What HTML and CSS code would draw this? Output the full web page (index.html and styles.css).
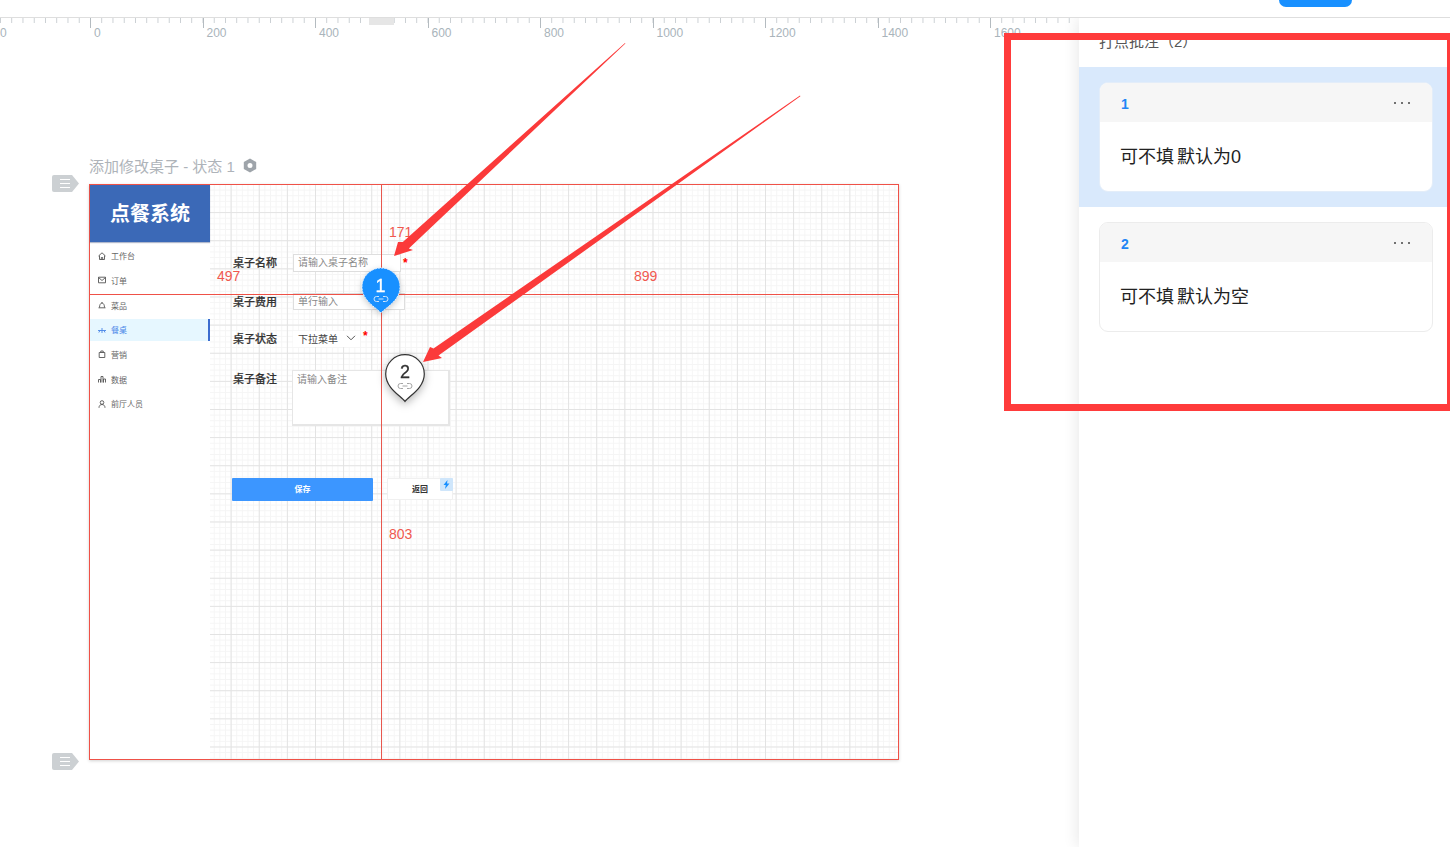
FILE: index.html
```html
<!DOCTYPE html>
<html lang="zh">
<head>
<meta charset="utf-8">
<title>打点批注</title>
<link rel="stylesheet" href="styles.css">
</head>
<body>
<header class="topbar"><div class="top-spacer"></div><div class="top-btn"></div><div class="top-end"></div></header>
<div class="workspace">
  <main class="canvas">
    <div class="ruler">
      <div class="ruler-first">0</div>
      <div class="ruler-cell">0</div><div class="ruler-cell">200</div><div class="ruler-cell">400</div><div class="ruler-cell">600</div>
      <div class="ruler-cell">800</div><div class="ruler-cell">1000</div><div class="ruler-cell">1200</div><div class="ruler-cell">1400</div><div class="ruler-cell">1600</div>
      <div class="ruler-mark"></div>
    </div>

    <div class="frame-title">添加修改桌子 - 状态 1
      <svg class="hex" width="14" height="15" viewBox="0 0 14 15"><path fill-rule="evenodd" d="M7 .5l6.2 3.5v7L7 14.500.8 11V4zM7 5a2.500 2.500 0 1 0 0 5 2.500 2.500 0 0 0 0-5z"/></svg>
    </div>
    <div class="tag tag-top"><svg width="27" height="17" viewBox="0 0 27 17"><path class="tag-body" d="M2 0h18l7 8.500-7 8.500H2a2 2 0 0 1-2-2V2a2 2 0 0 1 2-2z"/><path class="tag-lines" d="M8 4.500h10M8 8.500h10M8 12.500h10"/></svg></div>
    <div class="tag tag-bottom"><svg width="27" height="17" viewBox="0 0 27 17"><path class="tag-body" d="M2 0h18l7 8.500-7 8.500H2a2 2 0 0 1-2-2V2a2 2 0 0 1 2-2z"/><path class="tag-lines" d="M8 4.500h10M8 8.500h10M8 12.500h10"/></svg></div>

    <section class="frame">
      <aside class="sidebar">
        <div class="logo">点餐系统</div>
        <nav class="menu">
          <div class="menu-item"><svg viewBox="0 0 8 8"><path d="M.5 4L4 .8 7.500 4M1.500 3.500v4h5v-4M3.300 7.500V5.500h1.400v2"/></svg>工作台</div>
          <div class="menu-item"><svg viewBox="0 0 8 8"><path d="M.5 1.200h7v5.600h-7zM.5 1.500L4 4.500l3.500-3"/></svg>订单</div>
          <div class="menu-item"><svg viewBox="0 0 8 8"><path d="M.5 6.800h7M1.500 6.500C1.500 4 2.500 2 4 2s2.500 2 2.500 4.500M4 1v1"/></svg>菜品</div>
          <div class="menu-item is-active"><svg viewBox="0 0 8 8"><path d="M0 4.500h8M4 2v5M2 4.500L.8 6.500M6 4.500l1 2"/></svg>餐桌</div>
          <div class="menu-item"><svg viewBox="0 0 8 8"><path d="M1.200 2.500h5.600v5H1.200zM2.800 2.500V1h2.400v1.500"/></svg>营销</div>
          <div class="menu-item"><svg viewBox="0 0 8 8"><path d="M.5 7.500V4.500h2v3M3 7.500V1.500h2v6M5.500 7.500V4h2v3.500"/></svg>数据</div>
          <div class="menu-item"><svg viewBox="0 0 8 8"><circle cx="4" cy="2.500" r="1.800"/><path d="M1 7.800C1 5.800 2.200 4.500 4 4.500s3 1.300 3 3.300"/></svg>前厅人员</div>
        </nav>
      </aside>
      <div class="form">
        <div class="row row-name">
          <label class="label">桌子名称</label>
          <div class="input input-name">请输入桌子名称</div>
          <span class="star star-name">*</span>
        </div>
        <div class="row row-fee">
          <label class="label">桌子费用</label>
          <div class="input input-fee">单行输入</div>
        </div>
        <div class="row row-state">
          <label class="label">桌子状态</label>
          <div class="select">下拉菜单<svg width="10" height="6" viewBox="0 0 10 6"><path d="M1 .8l4 4 4-4"/></svg></div>
          <span class="star star-state">*</span>
        </div>
        <div class="row row-note">
          <label class="label">桌子备注</label>
          <div class="textarea">请输入备注</div>
        </div>
        <div class="actions">
          <div class="btn-save">保存</div>
          <div class="btn-back">返回
            <span class="bolt"><svg width="7" height="9" viewBox="0 0 7 9"><path d="M4.500 0L.5 5h2.300L2 9l4.500-5.500H4z"/></svg></span>
          </div>
        </div>
      </div>
    </section>

    <div class="line-h"></div>
    <div class="line-v"></div>
    <span class="measure m-top">171</span>
    <span class="measure m-left">497</span>
    <span class="measure m-right">899</span>
    <span class="measure m-bottom">803</span>

    <svg class="pin pin-one" width="40" height="48" viewBox="0 0 40 48">
      <path class="pin-shape" d="M20 46C16 41 1 34 1 20A19 19 0 1 1 39 20C39 34 24 41 20 46Z"/>
      <text x="19.500" y="24.500" text-anchor="middle" class="pin-num">1</text>
      <path class="pin-link" d="M18 29.500h-2.500a2.500 2.500 0 0 0 0 5H18M22 29.500h2.500a2.500 2.500 0 0 1 0 5H22M17.500 32h5"/>
    </svg>
    <svg class="pin pin-two" width="40" height="49" viewBox="0 0 40 49">
      <path class="pin-shape" d="M20 47.500C16 42 .7 34 .7 20A19.300 19.300 0 1 1 39.300 20C39.300 34 24 42 20 47.500Z"/>
      <text x="20" y="24" text-anchor="middle" class="pin-num">2</text>
      <path class="pin-link" d="M18 29.500h-2.500a2.500 2.500 0 0 0 0 5H18M22 29.500h2.500a2.500 2.500 0 0 1 0 5H22M17.500 32h5"/>
    </svg>
  </main>

  <aside class="panel">
    <h2 class="panel-title">打点批注（2）</h2>
    <div class="note-wrap is-current">
      <article class="note">
        <div class="note-head"><span class="note-num">1</span><svg width="16" height="2" viewBox="0 0 16 2"><circle cx="1" cy="1" r="1"/><circle cx="8" cy="1" r="1"/><circle cx="15" cy="1" r="1"/></svg></div>
        <div class="note-body">可不填 默认为0</div>
      </article>
    </div>
    <div class="note-wrap">
      <article class="note">
        <div class="note-head"><span class="note-num">2</span><svg width="16" height="2" viewBox="0 0 16 2"><circle cx="1" cy="1" r="1"/><circle cx="8" cy="1" r="1"/><circle cx="15" cy="1" r="1"/></svg></div>
        <div class="note-body">可不填 默认为空</div>
      </article>
    </div>
  </aside>
</div>

<svg class="arrows" width="1450" height="847" viewBox="0 0 1450 847">
  <polygon points="625,43 625.400,43.600 408.800,248.400 413,250 394,256 398,242 402.800,242"/>
  <polygon points="800,95.600 800.400,96.200 438.500,355.500 442,358 423,362 430,347 433.500,348.500"/>
</svg>
<div class="highlight-box"></div>
</body>
</html>
```
FILE: styles.css
```css
* { box-sizing: border-box; }
html, body { margin: 0; padding: 0; }
body {
  position: relative;
  width: 1450px;
  height: 847px;
  overflow: hidden;
  background: #fff;
  font-family: "Liberation Sans", "Noto Sans CJK SC", sans-serif;
  color: #333;
}

/* top strip */
.topbar {
  position: relative;
  z-index: 3;
  display: flex;
  height: 18px;
  background: #fff;
  border-bottom: 1px solid #dedede;
}
.top-spacer { width: 1279px; }
.top-btn {
  width: 73px;
  height: 7px;
  background: #1890ff;
  border-radius: 0 0 7px 7px;
}
.top-end { flex: 1; }

.workspace { display: flex; height: 829px; }

/* canvas: items are placed on a free artboard, coordinates relative to it */
.canvas {
  position: relative;
  width: 1079px;
  flex: none;
  overflow: hidden;
}

/* ruler */
.ruler {
  position: relative;
  display: flex;
  height: 24px;
  font-size: 12px;
  line-height: 14px;
  color: #a9b4bb;
  background-image: linear-gradient(to right, #c9ced2 1px, transparent 1px);
  background-size: 11.25px 5px;
  background-repeat: repeat-x;
}
.ruler-first { width: 90px; flex: none; padding-top: 8px; }
.ruler-cell {
  width: 112.5px;
  flex: none;
  padding: 8px 0 0 4px;
  background: linear-gradient(#b4bbc0, #b4bbc0) left top / 1px 10px no-repeat;
}
.ruler-mark {
  position: absolute;
  left: 369px;
  top: 0;
  width: 25px;
  height: 7px;
  background: #e6e6e6;
}

/* artboard title and tags */
.frame-title {
  position: absolute;
  left: 89px;
  top: 137px;
  display: flex;
  align-items: center;
  gap: 8px;
  height: 20px;
  font-size: 15px;
  color: #aeb3b9;
  white-space: nowrap;
}
.hex { fill: #9ea4aa; }
.tag { position: absolute; left: 52px; width: 27px; height: 17px; }
.tag svg { display: block; }
.tag-top { top: 157px; }
.tag-bottom { top: 735px; }
.tag-body { fill: #ccd0d3; }
.tag-lines { stroke: #fff; stroke-width: 1.2; fill: none; }

/* artboard */
.frame {
  position: absolute;
  left: 89px;
  top: 166px;
  width: 810px;
  height: 576px;
  display: flex;
  border: 1px solid #ef5147;
  box-shadow: 0 1px 3px rgba(0, 0, 0, .18);
  background-color: #fff;
  background-image:
    linear-gradient(to right, #e3e3e3 1.2px, transparent 1.2px),
    linear-gradient(to bottom, #e3e3e3 1.2px, transparent 1.2px),
    linear-gradient(to right, #f5f5f5 1px, transparent 1px),
    linear-gradient(to bottom, #f5f5f5 1px, transparent 1px);
  background-size: 28.125px 28.125px, 28.125px 28.125px, 5.625px 5.625px, 5.625px 5.625px;
  background-position: 0 -1px;
}

/* sidebar */
.sidebar { width: 120px; flex: none; background: #fff; }
.logo {
  height: 57px;
  background: #3b69b7;
  color: #fff;
  font-size: 20px;
  font-weight: 700;
  line-height: 59px;
  text-align: center;
  box-shadow: 0 1px 1px rgba(60, 80, 130, .4);
}
.menu { padding-top: 1.300px; }
.menu-item {
  display: flex;
  align-items: center;
  gap: 5px;
  height: 24.700px;
  padding-left: 8px;
  font-size: 8px;
  color: #666;
}
.menu-item svg {
  width: 8px;
  height: 8px;
  fill: none;
  stroke: #555;
  stroke-width: .9;
}
.menu-item.is-active {
  height: 22px;
  margin: 1.300px 0 1.400px;
  background: #e6f7ff;
  color: #4a86e8;
  border-right: 2px solid #3b6ccf;
}
.menu-item.is-active svg { stroke: #4a86e8; }

/* form */
.form { flex: 1; padding: 69px 0 0 23px; }
.row { display: flex; align-items: center; }
.row-name { height: 18px; }
.row-fee { height: 17px; margin-top: 21px; }
.row-state { height: 16px; margin-top: 21px; }
.row-note { height: 56px; margin-top: 23px; align-items: flex-start; }
.row-note .label { margin-top: 1px; }
.label {
  width: 60px;
  flex: none;
  font-size: 11px;
  line-height: 16px;
  font-weight: 500;
  color: #333;
  -webkit-text-stroke: .2px #333;
}
.input {
  height: 100%;
  padding-left: 4px;
  font-size: 10px;
  line-height: 16px;
  color: #888;
  background: #fff;
  border: 1px solid #dedede;
}
.input-name { width: 108px; }
.input-fee { width: 112px; }
.star { color: #f00; font-size: 12px; line-height: 12px; font-weight: 700; }
.star-name { margin: 0 0 0 2px; }
.star-state { margin: -6px 0 0 3px; }
.select {
  display: flex;
  align-items: center;
  width: 67px;
  height: 100%;
  padding: 0 4px 2px 5px;
  font-size: 10px;
  color: #444;
  background: #fff;
}
.select svg {
  margin-left: 8px;
  fill: none;
  stroke: #555;
  stroke-width: 1;
}
.textarea {
  width: 158px;
  height: 100%;
  margin-left: -1px;
  padding: 1px 4px;
  font-size: 10px;
  line-height: 15px;
  color: #888;
  background: #fff;
  border: 2px solid #e6e6e6;
  border-width: 1px 2px 2px 1px;
}
.actions { display: flex; gap: 14px; margin: 52px 0 0 -1px; }
.btn-save {
  width: 141px;
  height: 23px;
  background: #3c96ff;
  color: #fff;
  font-size: 8px;
  font-weight: 700;
  line-height: 23px;
  text-align: center;
  border-radius: 1px;
}
.btn-back {
  position: relative;
  width: 66px;
  height: 22px;
  background: #fff;
  border: 1px solid #f0f0f0;
  color: #333;
  font-size: 8px;
  font-weight: 700;
  line-height: 22px;
  text-align: center;
  border-radius: 1px;
}
.bolt {
  position: absolute;
  right: -1px;
  top: -1px;
  display: flex;
  align-items: center;
  justify-content: center;
  width: 13px;
  height: 13px;
  background: #cfe6fb;
  border-radius: 1px;
}
.bolt svg { fill: #1890ff; }

/* measurement overlay */
.line-h {
  position: absolute;
  left: 89px;
  top: 276px;
  width: 810px;
  height: 1px;
  background: #ef5147;
}
.line-v {
  position: absolute;
  left: 381px;
  top: 166px;
  width: 1px;
  height: 576px;
  background: #e8574e;
}
.measure {
  position: absolute;
  font-size: 14px;
  line-height: 16px;
  color: #f0584f;
}
.m-top { left: 389px; top: 206px; }
.m-left { left: 217px; top: 250px; }
.m-right { left: 634px; top: 250px; }
.m-bottom { left: 389px; top: 508px; }

/* annotation pins */
.pin { position: absolute; display: block; overflow: visible; }
.pin-one { left: 361px; top: 249px; filter: drop-shadow(0 2px 3px rgba(0, 0, 0, .2)); }
.pin-two { left: 385px; top: 336px; filter: drop-shadow(0 3px 4px rgba(0, 0, 0, .28)); }
.pin-num { font-size: 18px; font-family: "Liberation Sans", sans-serif; stroke-width: .3; }
.pin-link { fill: none; stroke-width: 1; }
.pin-one .pin-shape { fill: #1890ff; stroke: #dcecff; stroke-width: 1; stroke-dasharray: 2 1; }
.pin-one .pin-num { fill: #fff; stroke: #fff; }
.pin-one .pin-link { stroke: #cfe4fb; }
.pin-two .pin-shape { fill: #fff; stroke: #333; stroke-width: 1.200; }
.pin-two .pin-num { fill: #333; stroke: #333; }
.pin-two .pin-link { stroke: #a5a5a5; }

/* side panel */
.panel {
  position: relative;
  z-index: 2;
  flex: 1;
  background: #fff;
  box-shadow: -2px 0 14px rgba(0, 0, 0, .09);
}
.panel-title {
  margin: 0;
  padding-left: 20px;
  height: 49px;
  font-size: 15px;
  font-weight: 400;
  line-height: 48px;
  color: #555;
}
.note-wrap { padding: 15px 17px 15px 20px; }
.note-wrap.is-current { background: #d9e9fc; }
.note {
  height: 110px;
  background: #fff;
  border: 1px solid #ececec;
  border-radius: 9px;
  overflow: hidden;
}
.is-current .note { border-color: #e3edf9; }
.note-head {
  display: flex;
  align-items: center;
  justify-content: space-between;
  height: 39px;
  padding: 0 22px 0 21px;
  background: #f6f6f6;
}
.note-head svg { fill: #444; }
.note-num {
  position: relative;
  top: 1px;
  font-size: 14px;
  font-weight: 700;
  color: #1f86f5;
}
.note-body {
  padding-left: 20px;
  font-size: 18px;
  line-height: 71px;
  word-spacing: -2px;
  color: #222;
}

/* hand-drawn review marks on top of the screenshot */
.arrows {
  position: absolute;
  left: 0;
  top: 0;
  z-index: 4;
  fill: #fb3a3a;
  pointer-events: none;
}
.highlight-box {
  position: absolute;
  z-index: 5;
  left: 1004px;
  top: 33px;
  width: 450px;
  height: 378px;
  border: 7px solid #ff3b3b;
}
```
